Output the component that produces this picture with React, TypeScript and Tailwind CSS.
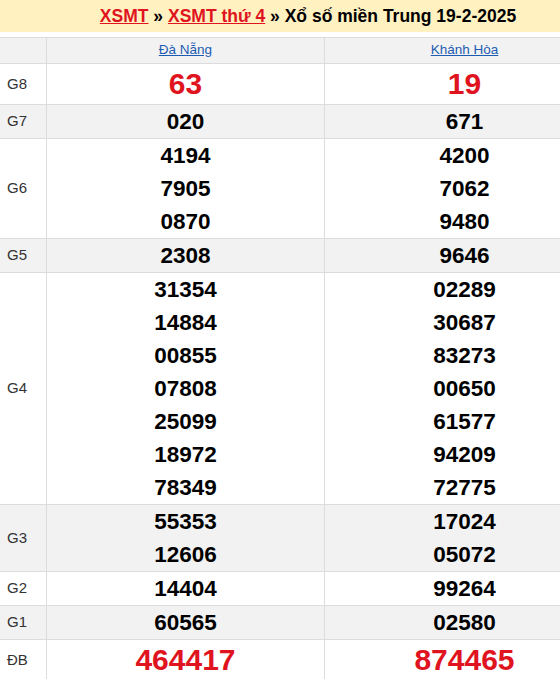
import React from "react";

type Row = { label: string; a: string[]; b: string[]; big?: boolean; gray?: boolean };

const rows: Row[] = [
  { label: "G8", a: ["63"], b: ["19"], big: true },
  { label: "G7", a: ["020"], b: ["671"], gray: true },
  { label: "G6", a: ["4194", "7905", "0870"], b: ["4200", "7062", "9480"] },
  { label: "G5", a: ["2308"], b: ["9646"], gray: true },
  {
    label: "G4",
    a: ["31354", "14884", "00855", "07808", "25099", "18972", "78349"],
    b: ["02289", "30687", "83273", "00650", "61577", "94209", "72775"],
  },
  { label: "G3", a: ["55353", "12606"], b: ["17024", "05072"], gray: true },
  { label: "G2", a: ["14404"], b: ["99264"] },
  { label: "G1", a: ["60565"], b: ["02580"], gray: true },
  { label: "ĐB", a: ["464417"], b: ["874465"], big: true },
];

function Nums({ list, big }: { list: string[]; big?: boolean }) {
  return (
    <div className="flex flex-col items-center justify-center border-r border-[#dcdcdc] last:border-r-0">
      {list.map((n, i) =>
        big ? (
          <div key={i} className="text-[30px] leading-[40px] font-bold text-[#e0141e]">
            {n}
          </div>
        ) : (
          <div key={i} className="text-[22.5px] leading-[33px] font-bold text-black">
            {n}
          </div>
        )
      )}
    </div>
  );
}

export default function App() {
  return (
    <div className="w-[560px] overflow-hidden bg-white" style={{ fontFamily: '"Liberation Sans", Arial, sans-serif' }}>
      <div className="w-[616px]">
        <div className="h-[32px] bg-[#fff1c0] flex items-center justify-center text-[17.5px] font-bold text-black">
          <span>
            <a className="text-[#e0141e] underline" href="#">XSMT</a>
            {" » "}
            <a className="text-[#e0141e] underline" href="#">XSMT thứ 4</a>
            {" » Xổ số miền Trung 19-2-2025"}
          </span>
        </div>
        <div className="mt-[5px] border-t border-[#dcdcdc]">
          <div className="grid grid-cols-[47px_278px_280px_1fr] bg-[#f2f2f2] border-b border-[#dcdcdc] h-[26px]">
            <div className="border-r border-[#dcdcdc]" />
            <div className="border-r border-[#dcdcdc] flex items-center justify-center">
              <a href="#" className="text-[13.5px] text-[#1c5db3] underline">Đà Nẵng</a>
            </div>
            <div className="border-r border-[#dcdcdc] flex items-center justify-center">
              <a href="#" className="text-[13.5px] text-[#1c5db3] underline">Khánh Hòa</a>
            </div>
            <div />
          </div>
          {rows.map((r) => (
            <div
              key={r.label}
              className={`grid grid-cols-[47px_278px_280px_1fr] border-b border-[#dcdcdc] ${r.gray ? "bg-[#f2f2f2]" : "bg-white"}`}
            >
              <div className="border-r border-[#dcdcdc] flex items-center pl-[7px] text-[15px] text-[#333]">
                {r.label}
              </div>
              <Nums list={r.a} big={r.big} />
              <Nums list={r.b} big={r.big} />
              <div />
            </div>
          ))}
        </div>
      </div>
    </div>
  );
}
